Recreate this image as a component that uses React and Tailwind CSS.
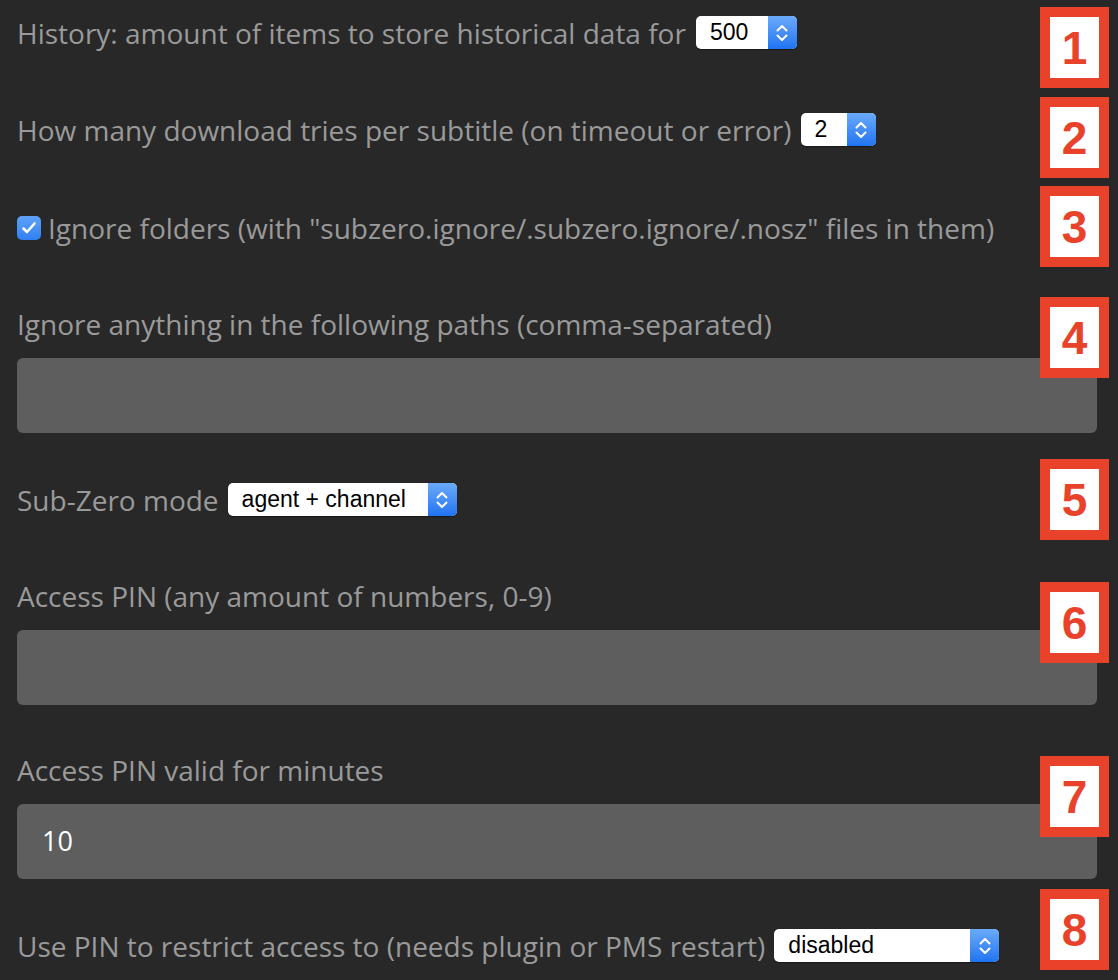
import React from "react";

const labelCls = "text-[28px] leading-[36px] text-[#9a9a9a] whitespace-nowrap";

function Chevrons() {
  return (
    <svg width="14" height="22" viewBox="0 0 14 22" fill="none">
      <path d="M2.5 8.5 L7 4 L11.5 8.5" stroke="white" strokeWidth="2" strokeLinecap="round" strokeLinejoin="round" />
      <path d="M2.5 13.5 L7 18 L11.5 13.5" stroke="white" strokeWidth="2" strokeLinecap="round" strokeLinejoin="round" />
    </svg>
  );
}

function Select({ value, widthCls }) {
  return (
    <div className={`flex h-[33px] ${widthCls} rounded-[5px] bg-white overflow-hidden shadow-[0_0.5px_1px_rgba(0,0,0,0.4)]`}>
      <div className="flex-1 flex items-center pl-[14px] text-[23px] text-black" style={{ fontFamily: '"Liberation Sans", Arial, sans-serif' }}>
        {value}
      </div>
      <div className="w-[29px] flex items-center justify-center bg-gradient-to-b from-[#6aaafa] to-[#1f73f1]">
        <Chevrons />
      </div>
    </div>
  );
}

function Badge({ n, top }) {
  return (
    <div
      className="absolute left-[1040px] w-[69px] h-[81px] bg-white border-[10px] border-[#e8432a] flex items-center justify-center text-[#e8432a] font-bold text-[46px] leading-none"
      style={{ top, fontFamily: '"Liberation Sans", Arial, sans-serif' }}
    >
      {n}
    </div>
  );
}

function TextInput({ value }) {
  return (
    <div className="mt-[16px] h-[75px] w-[1080px] rounded-[6px] bg-[#5e5e5e] flex items-center pl-[25px] text-[27px] text-white">
      {value}
    </div>
  );
}

export default function App() {
  return (
    <div
      className="relative w-[1118px] h-[980px] bg-[#282828] overflow-hidden pl-[17px]"
      style={{ fontFamily: '"Open Sans", "Noto Sans", sans-serif' }}
    >
      <div className="flex flex-col">
        <div className="mt-[16px] h-[33px] flex items-center gap-[10px]">
          <span className={labelCls}>History: amount of items to store historical data for</span>
          <Select value="500" widthCls="w-[101px]" />
        </div>
        <div className="mt-[64px] h-[33px] flex items-center gap-[9px]">
          <span className={labelCls}>How many download tries per subtitle (on timeout or error)</span>
          <Select value="2" widthCls="w-[75px]" />
        </div>
        <div className="mt-[65px] h-[33px] flex items-center gap-[7px]">
          <div className="w-[24px] h-[24px] rounded-[5px] bg-gradient-to-b from-[#5ea2f8] to-[#2f80f3] flex items-center justify-center">
            <svg width="16" height="14" viewBox="0 0 16 14" fill="none">
              <path d="M2.5 7.5 L6 11 L13.5 2.5" stroke="white" strokeWidth="2.6" strokeLinecap="round" strokeLinejoin="round" />
            </svg>
          </div>
          <span className={labelCls}>Ignore folders (with "subzero.ignore/.subzero.ignore/.nosz" files in them)</span>
        </div>
        <div className="mt-[62px] h-[36px] flex items-center">
          <span className={labelCls}>Ignore anything in the following paths (comma-separated)</span>
        </div>
        <TextInput value="" />
        <div className="mt-[50px] h-[33px] flex items-center gap-[9px]">
          <span className={labelCls}>Sub-Zero mode</span>
          <Select value="agent + channel" widthCls="w-[229px]" />
        </div>
        <div className="mt-[62px] h-[36px] flex items-center">
          <span className={labelCls}>Access PIN (any amount of numbers, 0-9)</span>
        </div>
        <TextInput value="" />
        <div className="mt-[47px] h-[36px] flex items-center">
          <span className={labelCls}>Access PIN valid for minutes</span>
        </div>
        <TextInput value="10" />
        <div className="mt-[50px] h-[33px] flex items-center gap-[9px]">
          <span className={labelCls}>Use PIN to restrict access to (needs plugin or PMS restart)</span>
          <Select value="disabled" widthCls="w-[225px]" />
        </div>
      </div>

      <Badge n="1" top={7} />
      <Badge n="2" top={97} />
      <Badge n="3" top={186} />
      <Badge n="4" top={297} />
      <Badge n="5" top={459} />
      <Badge n="6" top={582} />
      <Badge n="7" top={756} />
      <Badge n="8" top={889} />
    </div>
  );
}
